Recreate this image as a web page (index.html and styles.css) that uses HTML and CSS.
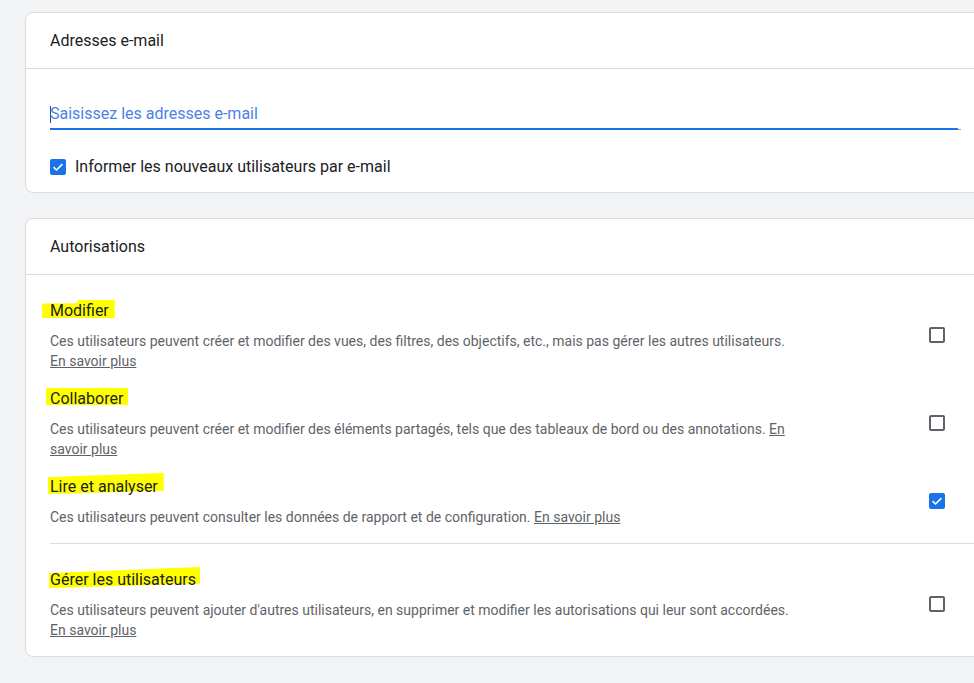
FILE: index.html
```html
<!DOCTYPE html>
<html lang="fr">
<head>
<meta charset="utf-8">
<title>Ajouter des utilisateurs</title>
<link rel="stylesheet" href="styles.css">
</head>
<body>
<main class="page">
  <section class="card">
    <header class="card-header">Adresses e-mail</header>
    <div class="card-body email-body">
      <div class="email-field"><span class="caret"></span><span class="placeholder">Saisissez les adresses e-mail</span></div>
      <label class="notify">
        <span class="checkbox checked"><svg viewBox="0 0 16 16" width="16" height="16"><path d="M3.6 8.2l2.9 2.8 5.9-5.9" fill="none" stroke="#fff" stroke-width="1.6"/></svg></span>
        <span class="notify-label">Informer les nouveaux utilisateurs par e-mail</span>
      </label>
    </div>
  </section>

  <section class="card">
    <header class="card-header">Autorisations</header>
    <div class="card-body">
      <div class="perm-group">
        <div class="perm-row">
          <div class="perm-text">
            <div class="perm-title"><span class="hl hl-modifier">Modifier</span></div>
            <p class="perm-desc">Ces utilisateurs peuvent créer et modifier des vues, des filtres, des objectifs, etc., mais pas gérer les autres utilisateurs. <a class="learn" href="#">En savoir plus</a></p>
          </div>
          <div class="perm-check"><span class="checkbox"></span></div>
        </div>
        <div class="perm-row">
          <div class="perm-text">
            <div class="perm-title"><span class="hl hl-collab">Collaborer</span></div>
            <p class="perm-desc">Ces utilisateurs peuvent créer et modifier des éléments partagés, tels que des tableaux de bord ou des annotations. <a class="learn" href="#">En savoir plus</a></p>
          </div>
          <div class="perm-check"><span class="checkbox"></span></div>
        </div>
        <div class="perm-row">
          <div class="perm-text">
            <div class="perm-title"><span class="hl hl-read">Lire et analyser</span></div>
            <p class="perm-desc">Ces utilisateurs peuvent consulter les données de rapport et de configuration. <a class="learn" href="#">En savoir plus</a></p>
          </div>
          <div class="perm-check"><span class="checkbox checked"><svg viewBox="0 0 16 16" width="16" height="16"><path d="M3.6 8.2l2.9 2.8 5.9-5.9" fill="none" stroke="#fff" stroke-width="1.6"/></svg></span></div>
        </div>
      </div>
      <div class="perm-group">
        <div class="perm-row">
          <div class="perm-text">
            <div class="perm-title"><span class="hl hl-manage">Gérer les utilisateurs</span></div>
            <p class="perm-desc">Ces utilisateurs peuvent ajouter d'autres utilisateurs, en supprimer et modifier les autorisations qui leur sont accordées. <a class="learn" href="#">En savoir plus</a></p>
          </div>
          <div class="perm-check"><span class="checkbox"></span></div>
        </div>
      </div>
    </div>
  </section>
</main>
</body>
</html>
```

FILE: styles.css
```css
* { box-sizing: border-box; }

html { overflow: hidden; }

body {
  margin: 0;
  background: #f1f3f4;
  font-family: Roboto, "Liberation Sans", Arial, sans-serif;
  color: #202124;
}

.page {
  padding: 12px 0 0 25px;
  display: flex;
  flex-direction: column;
  gap: 25px;
  width: 1010px;
}

.card {
  width: 961px;
  background: #fff;
  border: 1px solid #dadce0;
  border-radius: 8px;
  flex-shrink: 0;
}

.card-header {
  padding: 16px 24px 15px;
  font-size: 16px;
  line-height: 24px;
  color: #202124;
  border-bottom: 1px solid #dadce0;
}

.card-body {
  padding: 0 0 0 24px;
}

.email-body {
  padding: 33px 24px 13px;
}

.email-field {
  display: flex;
  align-items: center;
  font-size: 16px;
  line-height: 24px;
  padding-bottom: 2px;
  border-bottom: 2px solid #1a73e8;
  margin-right: 3px;
  position: relative;
}

.email-field::after {
  content: "";
  position: absolute;
  right: -3px;
  bottom: -2px;
  width: 3px;
  height: 1px;
  background: #9aa0a6;
}

.caret {
  width: 1px;
  height: 17px;
  background: #1f4fa8;
  margin-right: -1px;
  flex-shrink: 0;
}

.placeholder {
  color: #4a83e4;
}

.notify {
  margin-top: 25px;
  display: flex;
  align-items: center;
  gap: 9px;
  font-size: 16px;
  line-height: 24px;
  color: #202124;
}

.checkbox {
  width: 16px;
  height: 16px;
  border: 2px solid #5f6368;
  border-radius: 2px;
  display: inline-flex;
  flex-shrink: 0;
}

.checkbox.checked {
  border: none;
  background: #1a73e8;
}

.checkbox svg { display: block; }

.perm-group {
  padding: 16px 24px 8px 0;
}

.perm-group + .perm-group {
  border-top: 1px solid #dadce0;
}

.perm-row {
  display: flex;
  align-items: center;
  padding: 8px 0;
}

.perm-text {
  flex: 1;
  min-width: 0;
}

.perm-title {
  font-size: 16px;
  line-height: 24px;
  margin-bottom: 8px;
  color: #202124;
  position: relative;
  isolation: isolate;
}

.perm-desc {
  margin: 0;
  max-width: 745px;
  font-size: 14px;
  line-height: 20px;
  color: #5f6368;
}

.learn {
  color: #5f6368;
  text-decoration: underline;
}

.perm-check {
  width: 48px;
  display: flex;
  justify-content: center;
  flex-shrink: 0;
}

.hl {
  position: relative;
}

.hl::before {
  content: "";
  position: absolute;
  z-index: -1;
  background: #ffff00;
}

.hl-modifier::before {
  left: -8px; right: -6px; top: -1px; bottom: 2px;
  clip-path: polygon(0 20%, 48% 18%, 50% 0, 100% 0, 100% 100%, 0 100%);
}

.hl-collab::before {
  left: -4px; right: -5px; top: -1px; bottom: 3px;
}

.hl-read::before {
  left: -2px; right: -6px; top: -4px; bottom: 2px;
  clip-path: polygon(0 19%, 100% 0, 100% 85%, 0 100%);
}

.hl-manage::before {
  left: -1px; right: -4px; top: -3px; bottom: 1px;
  clip-path: polygon(0 29%, 100% 0, 100% 80%, 0 100%);
}
```
